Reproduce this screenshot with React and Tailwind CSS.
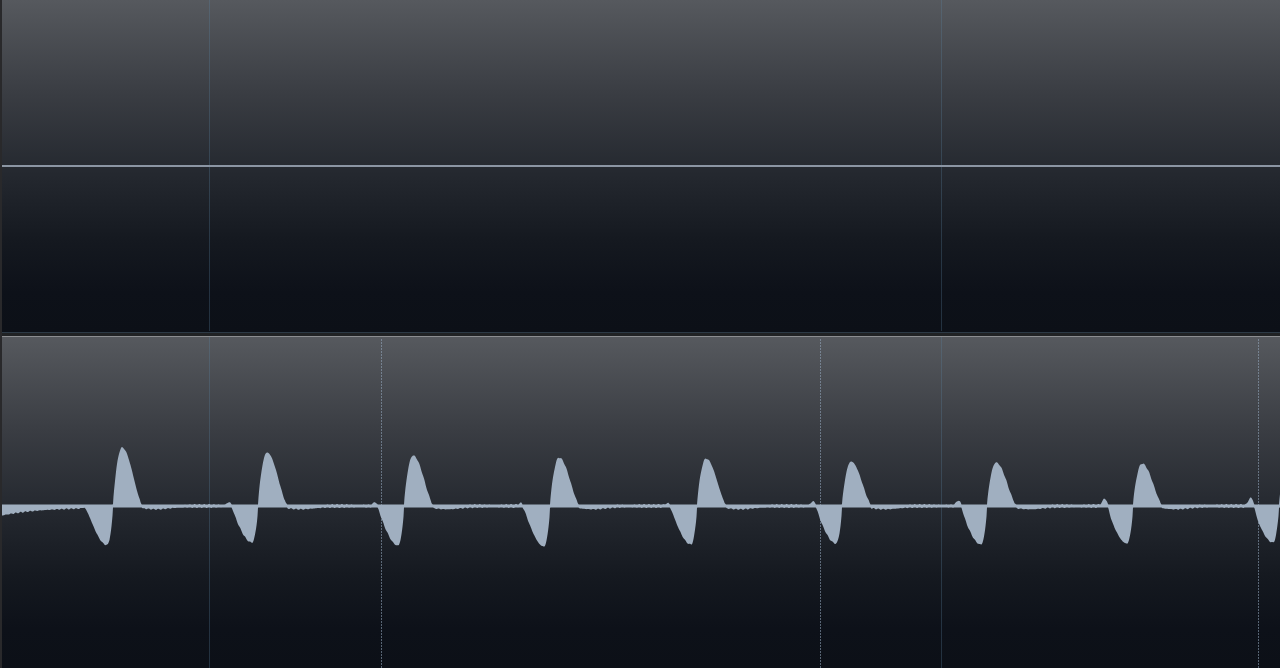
import React from 'react';

const LANE_H = 331;
const CY = 169;

// kick hits in the lower lane: peak x, peak height, trough depth, pre-bump height
const kicks = [
  { c: 122, h: 57, d: 37, b: 1 },
  { c: 267, h: 52, d: 35, b: 3 },
  { c: 413, h: 49, d: 38, b: 3 },
  { c: 559, h: 47, d: 39, b: 2 },
  { c: 706, h: 46, d: 37, b: 2 },
  { c: 851, h: 43, d: 36, b: 4 },
  { c: 996, h: 42, d: 37, b: 5 },
  { c: 1142, h: 41, d: 36, b: 7 },
  { c: 1288, h: 45, d: 35, b: 8 },
];

const signal = (x) => {
  let v = 0;
  if (x < 110) v -= 8 * Math.exp(-(x - 2) / 38);
  for (const k of kicks) {
    const d = x - k.c;
    // positive lobe
    if (d >= -9 && d <= 0) v += k.h * Math.pow(Math.sin((Math.PI / 2) * (1 + d / 9)), 0.8);
    if (d > 0 && d <= 21) v += k.h * Math.pow(Math.cos((Math.PI / 2) * (d / 21)), 1.7);
    // negative lobe
    const n = x - (k.c - 15);
    if (n >= -23 && n <= 0) v -= k.d * Math.pow(Math.sin((Math.PI / 2) * (1 + n / 23)), 1.4);
    if (n > 0 && n <= 6) v -= k.d * Math.pow(Math.cos((Math.PI / 2) * (n / 6)), 0.7);
    // small bump before the hit
    const p = x - (k.c - 36);
    if (Math.abs(p) <= 7) v += k.b * Math.pow(Math.cos((Math.PI / 2) * (p / 7)), 2);
    // slight tail after
    if (d > 18 && d < 72) v -= 1.8 * Math.exp(-Math.pow((d - 34) / 16, 2));
  }
  v += 0.6 * Math.sin(x * 1.3) * Math.sin(x * 0.07);
  return v;
};

const buildWave = () => {
  const top = [];
  const bottom = [];
  for (let x = 2; x <= 1280; x += 0.5) {
    const v = signal(x);
    top.push(`${x},${(CY - Math.max(v, 0) - 1.5).toFixed(2)}`);
    bottom.push(`${x},${(CY + Math.max(-v, 0) + 1.5).toFixed(2)}`);
  }
  return `M${top.join(' L')} L${bottom.reverse().join(' L')} Z`;
};

const wavePath = buildWave();

const GridLines = () => (
  <>
    {[209.5, 941.5].map((x) => (
      <line key={x} x1={x} x2={x} y1={0} y2={LANE_H} stroke="rgb(90,130,160)" strokeOpacity="0.3" strokeWidth="1" />
    ))}
  </>
);

const laneBg =
  'bg-[linear-gradient(to_bottom,#56595e_0%,#3a3d43_28%,#262a31_50%,#151920_72%,#0d1119_88%,#0c1017_100%)]';

export default function App() {
  return (
    <div className="flex h-[668px] w-[1280px] overflow-hidden bg-[#202224]">
      <div className="w-[2px] shrink-0 bg-[#29292b]" />
      <div className="flex flex-1 flex-col">
        <div className={`h-[333px] border-b border-[#2c3945] ${laneBg}`}>
          <svg width="1278" height={LANE_H + 1} viewBox={`2 0 1278 ${LANE_H + 1}`} className="block">
            <GridLines />
            <rect x="2" y="165" width="1278" height="2" fill="#8b95a3" />
          </svg>
        </div>
        <div className="h-[3px] bg-[#202224]" />
        <div className={`flex-1 border-t border-[#8c8e91] ${laneBg}`}>
          <svg width="1278" height={LANE_H} viewBox={`2 0 1278 ${LANE_H}`} className="block">
            <GridLines />
            {[381.5, 820.5, 1258.5].map((x) => (
              <line
                key={x}
                x1={x}
                x2={x}
                y1={2}
                y2={LANE_H}
                stroke="rgb(150,170,192)"
                strokeOpacity="0.55"
                strokeWidth="1"
                strokeDasharray="2 1"
              />
            ))}
            <path d={wavePath} fill="#a0afc0" />
          </svg>
        </div>
      </div>
    </div>
  );
}
